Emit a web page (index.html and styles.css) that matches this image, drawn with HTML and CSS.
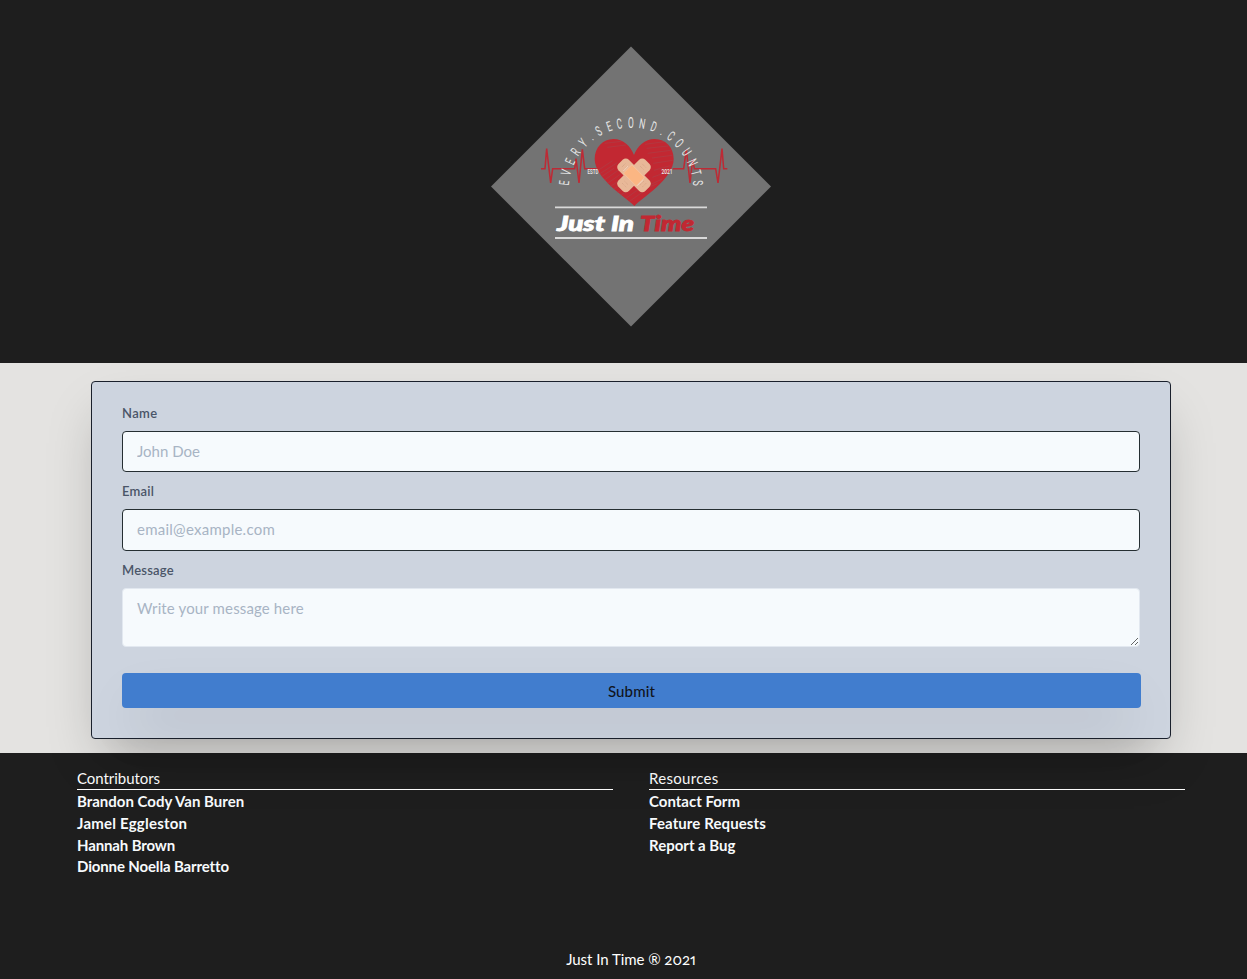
FILE: index.html
```html
<!DOCTYPE html>
<html lang="en">
<head>
<meta charset="utf-8">
<title>Just In Time</title>
<link rel="stylesheet" href="styles.css">
</head>
<body>
<header class="hero">
<svg class="logo" viewBox="491 47 280 280" role="img" aria-label="Just In Time logo">
  <path class="diamond" d="M631 46.6L771 186.6L631 326.6L491 186.6Z"/>
  <g transform="translate(530 100) scale(.33333)">
    <g class="pulse">
      <path d="M33 206H45L50 146L62 249L68 206H134L138 176L147 249L157 148L164 206H200"/>
      <path d="M428 206H461L469 148L480 249L488 178L493 206H557L564 249L576 146L581 206H592"/>
    </g>
    <path class="heart" d="M313 318C295 296 194 238 194 177C194 142 219 117 250 117C280 117 302 138 312 165C322 138 344 117 374 117C407 117 431 142 431 177C431 237 334 295 313 318Z"/>
    <g class="hatch">
      <path d="M203 212L248 182M208 222L262 188M213 231L252 205M221 242L264 211M230 252L272 222M239 261L282 232M249 269L290 241M260 279L296 255M271 287L306 263M285 297L324 269M296 306L342 273M224 130L275 124M232 142L288 135M345 133L403 125M350 145L414 138M353 160L422 151M366 174L427 166M370 190L428 181M372 211L420 197M367 232L411 216M356 256L397 237M336 270L382 251"/>
    </g>
    <g transform="translate(312 226)">
      <rect class="strip" x="-57" y="-22" width="114" height="44" rx="13" transform="rotate(-45)"/>
      <rect class="strip" x="-57" y="-22" width="114" height="44" rx="13" transform="rotate(45)"/>
      <rect class="pad" x="-27" y="-18" width="54" height="36" rx="3" transform="rotate(45)"/>
      <path class="dots" d="M-35 24L-23 36M-28 18L-17 29M-36 -25L-24 -37M-29 -18L-18 -29M35 -24L23 -36M28 -18L17 -29M36 24L24 36M29 18L18 29"/>
      <path class="glint" d="M10 31L28 14M-32 -13L-18 -28"/>
    </g>
  </g>
  <g class="motto">
    <text transform="rotate(-83.8 631 190) translate(631 127.6) scale(.6 1)">E</text>
    <text transform="rotate(-74.8 631 190) translate(631 127.6) scale(.6 1)">V</text>
    <text transform="rotate(-65 631 190) translate(631 127.6) scale(.6 1)">E</text>
    <text transform="rotate(-55.5 631 190) translate(631 127.6) scale(.6 1)">R</text>
    <text transform="rotate(-45.4 631 190) translate(631 127.6) scale(.6 1)">Y</text>
    <text transform="rotate(-37 631 190) translate(631 127.6) scale(.6 1)">.</text>
    <text transform="rotate(-28.7 631 190) translate(631 127.6) scale(.6 1)">S</text>
    <text transform="rotate(-19 631 190) translate(631 127.6) scale(.6 1)">E</text>
    <text transform="rotate(-10 631 190) translate(631 127.6) scale(.6 1)">C</text>
    <text transform="translate(631 127.6) scale(.6 1)">O</text>
    <text transform="rotate(9.7 631 190) translate(631 127.6) scale(.6 1)">N</text>
    <text transform="rotate(19.7 631 190) translate(631 127.6) scale(.6 1)">D</text>
    <text transform="rotate(28.2 631 190) translate(631 127.6) scale(.6 1)">.</text>
    <text transform="rotate(36.6 631 190) translate(631 127.6) scale(.6 1)">C</text>
    <text transform="rotate(45.8 631 190) translate(631 127.6) scale(.6 1)">O</text>
    <text transform="rotate(55.5 631 190) translate(631 127.6) scale(.6 1)">U</text>
    <text transform="rotate(65.8 631 190) translate(631 127.6) scale(.6 1)">N</text>
    <text transform="rotate(75 631 190) translate(631 127.6) scale(.6 1)">T</text>
    <text transform="rotate(84 631 190) translate(631 127.6) scale(.6 1)">S</text>
  </g>
  <text class="year" x="587.5" y="173.6" textLength="11" lengthAdjust="spacingAndGlyphs">ESTD</text>
  <text class="year" x="661.5" y="173.6" textLength="11" lengthAdjust="spacingAndGlyphs">2021</text>
  <path class="rule" d="M555 207.4H707M555 238H707"/>
  <text class="brand" x="557" y="230.7" textLength="77" lengthAdjust="spacingAndGlyphs">Just In</text>
  <text class="brand brand-red" x="640" y="230.7" textLength="54" lengthAdjust="spacingAndGlyphs">Time</text>
</svg>
</header>
<main class="contact">
<form class="card">
  <label class="label label-name" for="name">Name</label>
  <input class="field field-name" id="name" type="text" placeholder="John Doe">
  <label class="label" for="email">Email</label>
  <input class="field field-email" id="email" type="text" placeholder="email@example.com">
  <label class="label" for="message">Message</label>
  <textarea class="field field-message" id="message" placeholder="Write your message here"></textarea>
  <button class="submit" type="button">Submit</button>
</form>
</main>
<footer class="footer">
  <div class="columns">
    <section class="column">
      <h2 class="heading">Contributors</h2>
      <a class="link">Brandon Cody Van Buren</a>
      <a class="link link-wide">Jamel Eggleston</a>
      <a class="link link-tight">Hannah Brown</a>
      <a class="link link-tight">Dionne Noella Barretto</a>
    </section>
    <section class="column">
      <h2 class="heading heading-wide">Resources</h2>
      <a class="link">Contact Form</a>
      <a class="link link-feature">Feature Requests</a>
      <a class="link">Report a Bug</a>
    </section>
  </div>
  <p class="copyright">Just In Time ® 2021</p>
</footer>
</body>
</html>
```
FILE: styles.css
```css
* { box-sizing: border-box; }
html { overflow: hidden; }
body {
  margin: 0;
  width: 1262px;
  height: 979px;
  background: #1e1e1e;
  font-family: Lato, "Open Sans", sans-serif;
  font-size: 15px;
}
.hero {
  height: 363px;
  padding-top: 47px;
  display: flex;
  justify-content: center;
  align-items: flex-start;
  background: #1e1e1e;
}
.logo { width: 280px; height: 280px; display: block; overflow: visible; }
.diamond { fill: #737373; }
.pulse { fill: none; stroke: #bd2a35; stroke-width: 4.6; }
.heart { fill: #c22832; }
.hatch { fill: none; stroke: #98535a; stroke-width: 1.4; opacity: .75; }
.strip { fill: #e8b898; }
.pad { fill: #fbb683; stroke: #f3c6a6; stroke-width: 2; }
.dots { fill: none; stroke: #cf9c80; stroke-width: 2.5; stroke-dasharray: 2.5 3; }
.glint { fill: none; stroke: #f7dfcf; stroke-width: 2; }
.motto { fill: #e6e6e6; font: 400 14px Roboto, sans-serif; text-anchor: middle; }
.year { fill: #ececec; font: 500 7.5px Roboto, sans-serif; }
.rule { fill: none; stroke: #d9d9d9; stroke-width: 1.8; }
.brand {
  fill: #fff;
  stroke: #fff;
  stroke-width: .8;
  font: italic 900 20.5px Lato, sans-serif;
}
.brand-red { fill: #c22832; stroke: #c22832; }
.contact { height: 390px; padding: 18px 91px 0; background: #e4e3e1; }
.card {
  position: relative;
  display: flex;
  flex-direction: column;
  height: 358px;
  padding: 22px 30px 0;
  border: 1px solid #1a202c;
  border-radius: 4px;
  background: #cdd4df;
  box-shadow: 0 25px 50px -12px rgba(0, 0, 0, .25);
}
.label {
  height: 18px;
  margin-bottom: 9px;
  line-height: 18px;
  font-size: 13px;
  font-weight: 600;
  letter-spacing: .2px;
  color: #4a5568;
}
.label-name { letter-spacing: .35px; }
.field {
  width: 1018px;
  height: 41px;
  margin: 0 0 10px;
  padding: 0 14px 1px;
  border: 1px solid #252e32;
  border-radius: 4px;
  background: #f6fafd;
  font: 15px/22px Lato, sans-serif;
}
.field::placeholder { color: #a8b4c4; opacity: 1; }
.field-email { height: 42px; letter-spacing: .25px; padding-bottom: 2px; }
.field-message {
  height: 59px;
  margin-bottom: 26px;
  padding-top: 8px;
  border-color: #e2e8f0;
  letter-spacing: .14px;
  resize: vertical;
}
.submit {
  height: 35px;
  margin-right: -1px;
  padding: 0;
  border: 0;
  border-radius: 4px;
  background: #417dce;
  box-shadow: 0 25px 50px -12px rgba(0, 0, 0, .25);
  color: #10141c;
  font: 500 15px Lato, sans-serif;
  letter-spacing: .15px;
}
.footer { height: 226px; padding: 15px 77px 0; color: #fff; }
.columns { display: grid; grid-template-columns: 536px 536px; gap: 36px; height: 181px; }
.column { display: flex; flex-direction: column; align-items: flex-start; }
.heading {
  width: 100%;
  height: 22px;
  margin: 0 0 1px;
  border-bottom: 1px solid #fff;
  font-size: 15px;
  font-weight: 400;
  line-height: 20px;
  letter-spacing: -.05px;
}
.heading-wide { letter-spacing: .3px; }
.link { height: 21.8px; line-height: 21.8px; font-weight: 700; color: #f7fafc; white-space: nowrap; }
.link-wide { letter-spacing: .22px; }
.link-tight { letter-spacing: -.14px; }
.link-feature { letter-spacing: .1px; }
.copyright {
  margin: 0;
  line-height: 20px;
  text-align: center;
  letter-spacing: -.05px;
  font-variant-numeric: oldstyle-nums proportional-nums;
}
```
